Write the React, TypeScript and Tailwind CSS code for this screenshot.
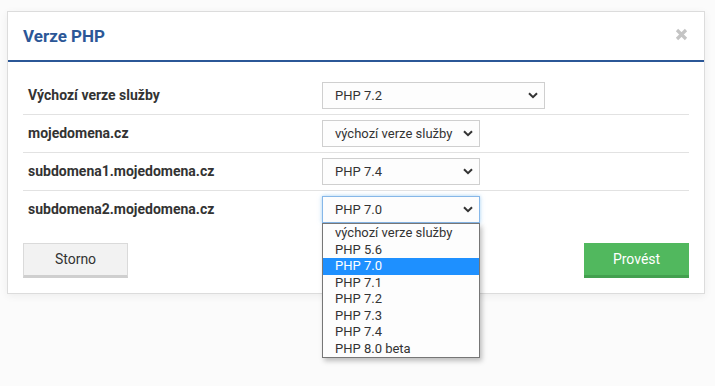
import React from "react";

const Chevron = () => (
  <svg width="10" height="7" viewBox="0 0 10 7" className="shrink-0">
    <path d="M1 1.2 L5 5.2 L9 1.2" fill="none" stroke="#333" strokeWidth="2" />
  </svg>
);

function Select({ value, w, focused }: { value: string; w: string; focused?: boolean }) {
  return (
    <div
      className={`${w} h-[27px] flex items-center justify-between pl-[12px] pr-[6px] text-[13px] text-[#333] bg-[#fdfdfd] border ${
        focused ? "border-[#86b7e8] shadow-[0_0_4px_rgba(102,175,233,0.6)]" : "border-[#cfcfcf]"
      }`}
    >
      <span>{value}</span>
      <Chevron />
    </div>
  );
}

const options = [
  "výchozí verze služby",
  "PHP 5.6",
  "PHP 7.0",
  "PHP 7.1",
  "PHP 7.2",
  "PHP 7.3",
  "PHP 7.4",
  "PHP 8.0 beta",
];

function Row({ label, children, last }: { label: string; children: React.ReactNode; last?: boolean }) {
  return (
    <div className={`flex items-center py-[5px] ${last ? "" : "border-b border-[#e2e2e2]"}`}>
      <div className="w-[299px] pl-[5px] text-[14px] font-bold text-[#333]">{label}</div>
      {children}
    </div>
  );
}

export default function App() {
  return (
    <div
      className="w-[715px] h-[386px] bg-[#fbfbfb] pt-[11px] pl-[7px]"
      style={{ fontFamily: "Roboto, 'Liberation Sans', sans-serif" }}
    >
      <div className="w-[698px] bg-white border border-[#dcdcdc] shadow-[0_2px_8px_rgba(0,0,0,0.06)]">
        <div className="h-[50px] flex items-center justify-between pl-[15px] pr-[16px] border-b-2 border-[#2b5797]">
          <div className="text-[17px] font-bold text-[#2b5797] pt-[1px]">Verze PHP</div>
          <svg width="13" height="13" viewBox="0 0 13 13" className="mt-[-3px]">
            <path d="M2 2 L11 11 M11 2 L2 11" stroke="#c4c4c4" strokeWidth="3.2" />
          </svg>
        </div>
        <div className="px-[15px] pt-[15px] pb-[15px]">
          <Row label="Výchozí verze služby">
            <Select value="PHP 7.2" w="w-[223px]" />
          </Row>
          <Row label="mojedomena.cz">
            <Select value="výchozí verze služby" w="w-[158px]" />
          </Row>
          <Row label="subdomena1.mojedomena.cz">
            <Select value="PHP 7.4" w="w-[158px]" />
          </Row>
          <Row label="subdomena2.mojedomena.cz" last>
            <div className="relative">
              <Select value="PHP 7.0" w="w-[158px]" focused />
              <div className="absolute left-0 top-[27px] w-[158px] bg-[#fdfdfd] border border-[#767676] shadow-[2px_3px_5px_rgba(0,0,0,0.25)] z-10 pt-[1px]">
                {options.map((o) => (
                  <div
                    key={o}
                    className={`h-[16.5px] leading-[16.5px] pl-[12px] text-[13px] ${
                      o === "PHP 7.0" ? "bg-[#1e90ff] text-white" : "text-[#333]"
                    }`}
                  >
                    {o}
                  </div>
                ))}
              </div>
            </div>
          </Row>
          <div className="flex justify-between mt-[15px]">
            <button className="w-[105px] h-[35px] bg-[#f2f2f2] border border-[#dadada] border-b-[3px] border-b-[#cfcfcf] text-[14px] text-[#333]">
              Storno
            </button>
            <button className="w-[105px] h-[35px] bg-[#51b85e] border-b-[3px] border-[#43a04f] text-[14px] text-white">
              Provést
            </button>
          </div>
        </div>
      </div>
    </div>
  );
}
